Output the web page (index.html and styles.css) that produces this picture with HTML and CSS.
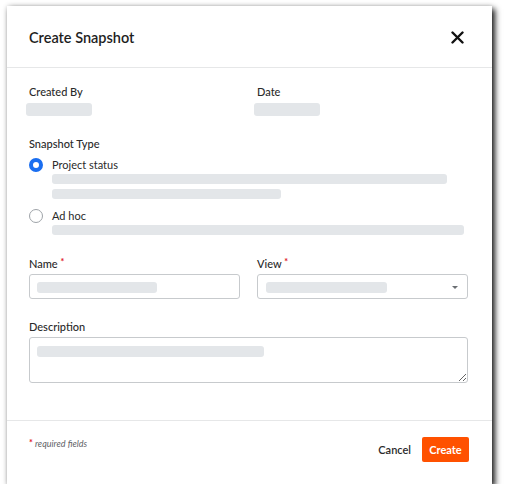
FILE: index.html
```html
<!DOCTYPE html>
<html>
<head>
<meta charset="utf-8">
<link rel="stylesheet" href="styles.css">
</head>
<body>
<div class="dialog">
  <div class="header">
    <h1 class="title">Create Snapshot</h1>
    <button class="close" aria-label="Close">
      <svg width="13" height="13" viewBox="0 0 13 13"><path d="M1.5 1.5 L11.5 11.5 M11.5 1.5 L1.5 11.5" stroke="#111" stroke-width="2.4" stroke-linecap="round"/></svg>
    </button>
  </div>
  <div class="body">
    <div class="two-col meta">
      <div class="col">
        <div class="label">Created By</div>
        <div class="sk sk-meta"></div>
      </div>
      <div class="col">
        <div class="label">Date</div>
        <div class="sk sk-meta"></div>
      </div>
    </div>

    <div class="type">
      <div class="label">Snapshot Type</div>
      <div class="option first">
        <span class="radio checked"></span>
        <div class="opt-body">
          <div class="opt-label">Project status</div>
          <div class="sk line" style="width:395px"></div>
          <div class="sk line second" style="width:229px"></div>
        </div>
      </div>
      <div class="option">
        <span class="radio"></span>
        <div class="opt-body">
          <div class="opt-label">Ad hoc</div>
          <div class="sk line" style="width:412px"></div>
        </div>
      </div>
    </div>

    <div class="two-col fields">
      <div class="col">
        <div class="label">Name <span class="req">*</span></div>
        <div class="input"><div class="sk in-sk" style="width:120px"></div></div>
      </div>
      <div class="col">
        <div class="label">View <span class="req">*</span></div>
        <div class="input select"><div class="sk in-sk" style="width:121px"></div><span class="caret"></span></div>
      </div>
    </div>

    <div class="desc">
      <div class="label">Description</div>
      <div class="textarea"><div class="sk in-sk" style="width:227px"></div></div>
    </div>
  </div>
  <div class="footer">
    <div class="req-note"><span class="req">*</span> required fields</div>
    <div class="actions">
      <button class="btn-cancel">Cancel</button>
      <button class="btn-create">Create</button>
    </div>
  </div>
</div>
</body>
</html>
```

FILE: styles.css
```css
* { box-sizing: border-box; }
html, body { margin: 0; padding: 0; background: #fff; }
body {
  font-family: Lato, "Liberation Sans", sans-serif;
  color: #232323;
  padding: 6px 0 0 7px;
}
.dialog {
  width: 485px;
  height: 478px;
  background: #fff;
  box-shadow: 0 0 5px rgba(0,0,0,0.15), 3px 3px 6px rgba(0,0,0,0.9);
  display: flex;
  flex-direction: column;
}
.header {
  height: 62px;
  border-bottom: 1px solid #e6e7e8;
  display: flex;
  align-items: center;
  justify-content: space-between;
  padding: 2px 28px 0 22px;
}
.title {
  margin: 0;
  font-size: 14.5px;
  font-weight: 600;
  color: #1e1e1e;
}
.close {
  border: 0;
  background: none;
  padding: 0;
  width: 13px;
  height: 13px;
  display: flex;
}
.body {
  flex: 1;
  padding: 17px 24px 0 22px;
}
.label {
  font-size: 11px;
  line-height: 14px;
  font-weight: 500;
  color: #2a2a2a;
}
.req {
  color: #e0141e;
  font-weight: 700;
  font-size: 9px;
  position: relative;
  top: -3px;
  line-height: 0;
}
.sk {
  background: #e3e6e9;
  border-radius: 3px;
}
.two-col {
  display: grid;
  grid-template-columns: 211px 211px;
  column-gap: 17px;
}
.sk-meta { width: 66px; height: 13px; margin-top: 4px; margin-left: -3px; }
.type { margin-top: 21px; }
.option {
  display: flex;
  margin-top: 10px;
}
.option.first { margin-top: 7px; }
.radio {
  width: 14px;
  height: 14px;
  border-radius: 50%;
  border: 1px solid #9ea3a8;
  background: #fff;
  flex: none;
  margin-right: 9px;
}
.radio.checked {
  border: 4px solid #1a6ef0;
}
.opt-label {
  font-size: 11px;
  line-height: 14px;
  color: #2a2a2a;
}
.line { height: 10px; margin-top: 2px; }
.line.second { margin-top: 5px; }
.fields { margin-top: 22px; }
.input {
  margin-top: 3px;
  height: 25px;
  border: 1px solid #c7cacd;
  border-radius: 3px;
  padding: 7px 0 0 7px;
  position: relative;
}
.select { padding-left: 8px; }
.in-sk { height: 11px; }
.caret {
  position: absolute;
  right: 9px;
  top: 11px;
  width: 0;
  height: 0;
  border-left: 3px solid transparent;
  border-right: 3px solid transparent;
  border-top: 3px solid #6b6f73;
}
.desc { margin-top: 21px; }
.textarea {
  margin-top: 3px;
  width: 439px;
  height: 46px;
  border: 1px solid #c7cacd;
  border-radius: 3px;
  padding: 8px 0 0 7px;
  resize: vertical;
  overflow: auto;
}
.footer {
  height: 64px;
  border-top: 1px solid #e6e7e8;
  display: flex;
  justify-content: space-between;
  align-items: flex-start;
  padding: 16px 23px 0 22px;
}
.req-note {
  font-size: 9px;
  font-style: italic;
  color: #5f6368;
  line-height: 12px;
  margin-top: 1px;
}
.req-note .req { font-style: normal; top: -1px; }
.actions { display: flex; align-items: center; }
.btn-cancel {
  border: 0;
  background: none;
  font-family: inherit;
  font-size: 11px;
  font-weight: 600;
  color: #2a2a2a;
  padding: 0;
  margin-right: 11px;
}
.btn-create {
  border: 0;
  background: #ff5100;
  color: #fff;
  font-family: inherit;
  font-size: 11px;
  font-weight: 700;
  width: 47px;
  height: 25px;
  border-radius: 2px;
  padding: 0;
}
```
